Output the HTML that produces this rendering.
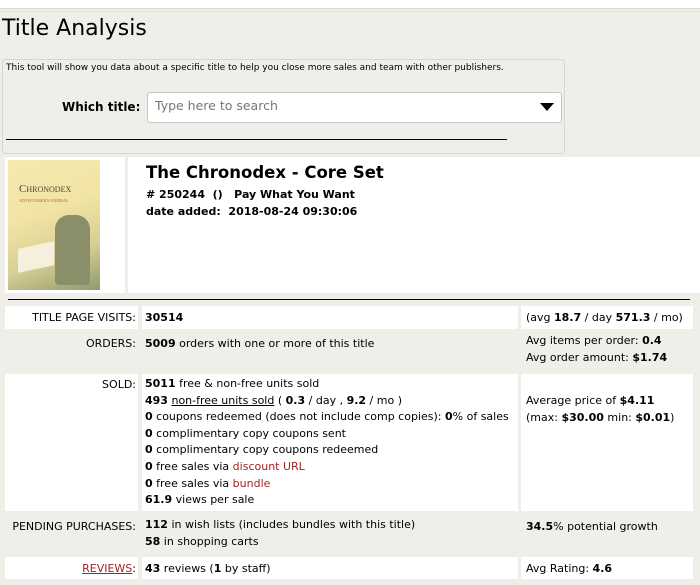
<!DOCTYPE html>
<html><head><meta charset="utf-8"><style>
body{margin:0;width:700px;height:585px;overflow:hidden;background:#efeee9;font-family:"DejaVu Sans","Liberation Sans",sans-serif;font-size:11px;color:#000;position:relative}
.a{position:absolute}
.w{position:absolute;background:#fff}
b{font-weight:bold}
.r{color:#a52222}
.ln{line-height:16.6px}
</style></head><body>
<div class="a" style="left:0;top:0;width:700px;height:8px;background:#fff"></div>
<div class="a" style="left:0;top:8px;width:700px;height:1px;background:#d8d8d4"></div>
<div class="a" style="left:0;top:11px;width:700px;height:1px;background:#e0e0dc"></div>
<div class="a" style="left:2px;top:16px;font-size:22px;font-family:'DejaVu Sans',sans-serif">Title Analysis</div>
<div class="a" style="left:2px;top:59px;width:561px;height:93px;border:1px solid #d6d5d0;border-radius:3px"></div>
<div class="a" style="left:6px;top:63px;font-size:9px">This tool will show you data about a specific title to help you close more sales and team with other publishers.</div>
<div class="a" style="left:62px;top:100px;font-size:12px;font-weight:bold">Which title:</div>
<div class="a" style="left:147px;top:92px;width:413px;height:29px;background:#fff;border:1px solid #c4c4c4;border-radius:3px"></div>
<div class="a" style="left:155px;top:98px;font-size:12.5px;color:#777">Type here to search</div>
<div class="a" style="left:540px;top:103px;width:0;height:0;border-left:7px solid transparent;border-right:7px solid transparent;border-top:8px solid #000"></div>
<div class="a" style="left:6px;top:139px;width:501px;height:1px;background:#000"></div>

<div class="w" style="left:5px;top:157px;width:120px;height:136px"></div>
<div class="w" style="left:128px;top:157px;width:572px;height:136px"></div>
<div class="a" style="left:8px;top:160px;width:92px;height:130px;background:linear-gradient(160deg,#f5e9b0 0%,#f1e4a4 40%,#d8cf95 70%,#8f9a6e 100%)"></div>
<div class="a" style="left:19px;top:183px;font-family:'Liberation Serif',serif;font-size:11px;color:#4a4a3a">C<span style="font-size:8px">HRONODEX</span></div>
<div class="a" style="left:19px;top:198px;font-family:'Liberation Serif',serif;font-size:4px;color:#c05a2a">ADVENTURER'S JOURNAL</div>
<div class="a" style="left:55px;top:215px;width:35px;height:70px;background:#8a8f6a;border-radius:14px 14px 4px 4px"></div>
<div class="a" style="left:18px;top:245px;width:36px;height:24px;background:#f4f0dd;transform:skewY(-12deg)"></div>
<div class="a" style="left:146px;top:163px;font-size:16.5px;font-weight:bold">The Chronodex - Core Set</div>
<div class="a" style="left:146px;top:188px;font-weight:bold">#&nbsp;250244 &nbsp;() &nbsp; Pay What You Want</div>
<div class="a" style="left:146px;top:205px;font-weight:bold">date added: &nbsp;2018-08-24 09:30:06</div>
<div class="a" style="left:8px;top:299px;width:682px;height:1px;background:#000"></div>

<div class="w" style="left:5px;top:306px;width:133px;height:23px"></div>
<div class="w" style="left:142px;top:306px;width:376px;height:23px"></div>
<div class="w" style="left:521px;top:306px;width:172px;height:23px"></div>
<div class="a" style="right:564px;top:311px">TITLE PAGE VISITS:</div>
<div class="a" style="left:145px;top:311px"><b>30514</b></div>
<div class="a" style="left:526px;top:311px">(avg <b>18.7</b> / day <b>571.3</b> / mo)</div>

<div class="a" style="right:564px;top:337px">ORDERS:</div>
<div class="a" style="left:145px;top:337px"><b>5009</b> orders with one or more of this title</div>
<div class="a ln" style="left:526px;top:333px">Avg items per order: <b>0.4</b><br>Avg order amount: <b>$1.74</b></div>

<div class="w" style="left:5px;top:374px;width:133px;height:137px"></div>
<div class="w" style="left:142px;top:374px;width:376px;height:137px"></div>
<div class="w" style="left:521px;top:374px;width:172px;height:137px"></div>
<div class="a" style="right:564px;top:378px">SOLD:</div>
<div class="a ln" style="left:145px;top:376px;white-space:nowrap"><b>5011</b> free &amp; non-free units sold<br><b>493</b> <u>non-free units sold</u> ( <b>0.3</b> / day , <b>9.2</b> / mo )<br><b>0</b> coupons redeemed (does not include comp copies): <b>0</b>% of sales<br><b>0</b> complimentary copy coupons sent<br><b>0</b> complimentary copy coupons redeemed<br><b>0</b> free sales via <span class="r">discount URL</span><br><b>0</b> free sales via <span class="r">bundle</span><br><b>61.9</b> views per sale</div>
<div class="a ln" style="left:526px;top:393px">Average price of <b>$4.11</b><br>(max: <b>$30.00</b> min: <b>$0.01</b>)</div>

<div class="a" style="right:564px;top:520px">PENDING PURCHASES:</div>
<div class="a ln" style="left:145px;top:517px"><b>112</b> in wish lists (includes bundles with this title)<br><b>58</b> in shopping carts</div>
<div class="a" style="left:526px;top:520px"><b>34.5</b>% potential growth</div>

<div class="w" style="left:5px;top:557px;width:133px;height:22px"></div>
<div class="w" style="left:142px;top:557px;width:376px;height:22px"></div>
<div class="w" style="left:521px;top:557px;width:172px;height:22px"></div>
<div class="a" style="right:564px;top:562px"><u class="r">REVIEWS</u>:</div>
<div class="a" style="left:145px;top:562px"><b>43</b> reviews (<b>1</b> by staff)</div>
<div class="a" style="left:526px;top:562px">Avg Rating: <b>4.6</b></div>
</body></html>
